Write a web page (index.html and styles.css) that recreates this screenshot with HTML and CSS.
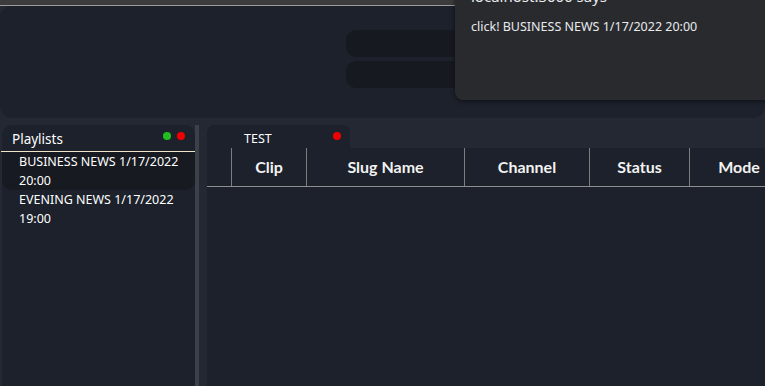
FILE: index.html
```html
<!DOCTYPE html>
<html>
<head>
<meta charset="UTF-8">
<link rel="stylesheet" href="styles.css">
</head>
<body>
<div class="topbar"></div>
<header class="hero">
  <div class="pills">
    <div class="pill"></div>
    <div class="pill"></div>
  </div>
</header>
<main class="workspace">
  <aside class="playlists">
    <div class="panel-head">
      <span class="panel-title">Playlists</span>
      <span class="dots"><i class="dot green"></i><i class="dot red"></i></span>
    </div>
    <ul class="playlist-list">
      <li class="selected">BUSINESS NEWS 1/17/2022 20:00</li>
      <li>EVENING NEWS 1/17/2022 19:00</li>
    </ul>
  </aside>
  <div class="splitter"></div>
  <section class="rundown">
    <div class="tabs">
      <div class="tab">TEST<i class="dot red"></i></div>
    </div>
    <div class="grid">
      <div class="grid-head">
        <div class="col c0"></div>
        <div class="col c1">Clip</div>
        <div class="col c2">Slug Name</div>
        <div class="col c3">Channel</div>
        <div class="col c4">Status</div>
        <div class="col c5">Mode</div>
      </div>
    </div>
  </section>
</main>
<div class="dialog">
  <div class="dialog-title">localhost:3000 says</div>
  <div class="dialog-msg">click! BUSINESS NEWS 1/17/2022 20:00</div>
</div>
</body>
</html>
```
FILE: styles.css
```css
html, body {
  margin: 0;
  padding: 0;
}
body {
  position: relative;
  height: 386px;
  overflow: hidden;
  background-color: #232833;
  color: #fff;
  font-family: "Noto Sans", "Open Sans", sans-serif;
  display: flex;
  flex-direction: column;
}
.topbar {
  height: 5px;
  background-color: #3c3c3c;
  border-bottom: 1px solid #9b9b9b;
  flex: none;
}
.hero {
  height: 112px;
  flex: none;
  background-color: #1c212b;
  border-radius: 12px;
}
.pills {
  display: flex;
  flex-direction: column;
  gap: 4px;
  padding: 24px 0 0 346px;
}
.pill {
  width: 320px;
  height: 27px;
  border-radius: 10px;
  background-color: #16191f;
}
.workspace {
  flex: 1;
  display: flex;
  margin-top: 7px;
  padding-left: 2px;
  min-height: 0;
}

/* playlists panel */
.playlists {
  width: 193px;
  flex: none;
  background-color: #1c212b;
  border-radius: 10px 10px 0 0;
}
.panel-head {
  height: 26px;
  display: flex;
  align-items: center;
  justify-content: space-between;
  padding: 0 10px 0 11px;
  border-bottom: 1px solid #efe3c8;
  margin-left: -1px;
}
.panel-title {
  font-size: 13.5px;
  padding-top: 2px;
}
.dots {
  display: flex;
  gap: 6px;
  margin-top: -4px;
}
.dot {
  display: inline-block;
  width: 8px;
  height: 8px;
  border-radius: 50%;
}
.dot.green { background-color: #1fbf1f; }
.dot.red { background-color: #f00000; }
.playlist-list {
  list-style: none;
  margin: 0;
  padding: 0;
}
.playlist-list li {
  padding: 0 4px 0 17px;
  font-size: 12.5px;
  line-height: 19px;
}
.playlist-list li.selected {
  background-color: #171a21;
  border-radius: 0 0 10px 10px;
}

.splitter {
  width: 4px;
  flex: none;
  background-color: #3b4049;
  margin-right: 8px;
}

/* rundown panel */
.rundown {
  flex: 1;
  display: flex;
  flex-direction: column;
  min-width: 0;
}
.tabs {
  display: flex;
  height: 23px;
  flex: none;
}
.tab {
  width: 97px;
  padding: 4px 9px 0 37px;
  display: flex;
  align-items: center;
  justify-content: space-between;
  background-color: #1c212b;
  border-radius: 8px 8px 0 0;
  font-size: 12.5px;
}
.tab .dot {
  margin-top: -5px;
}
.grid {
  flex: 1;
  background-color: #1c212b;
  overflow: hidden;
}
.grid-head {
  display: flex;
  height: 38px;
  border-bottom: 1px solid #8e8e8e;
  font-family: Lato, sans-serif;
  font-weight: bold;
  font-size: 16px;
  color: #f2f2f2;
}
.col {
  flex: none;
  display: flex;
  align-items: center;
  justify-content: center;
  padding-bottom: 2px;
  box-sizing: border-box;
  border-right: 1px solid #7d7d7d;
}
.c0 { width: 25px; }
.c1 { width: 75px; }
.c2 { width: 158px; }
.c3 { width: 125px; }
.c4 { width: 100px; }
.c5 { width: 98px; border-right: none; }

/* alert dialog */
.dialog {
  position: absolute;
  left: 455px;
  top: -30px;
  width: 330px;
  height: 130px;
  box-sizing: border-box;
  padding: 16px 16px 0 16px;
  background-color: #292a2d;
  border-radius: 8px;
  box-shadow: 0 1px 5px rgba(0, 0, 0, 0.55);
  color: #e8eaed;
}
.dialog-title {
  font-size: 15px;
  line-height: 20px;
}
.dialog-msg {
  margin-top: 12px;
  font-size: 12.5px;
  line-height: 18px;
}
```
